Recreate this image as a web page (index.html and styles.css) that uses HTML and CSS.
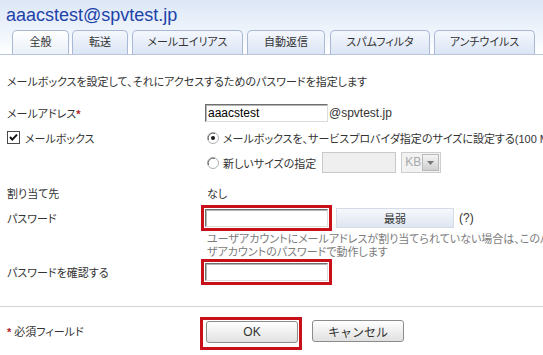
FILE: index.html
```html
<!DOCTYPE html>
<html lang="ja">

<head>
    <meta charset="UTF-8">
    <meta name="viewport" content="width=device-width, initial-scale=1.0">
    <title>aaacstest@spvtest.jp</title>
    <link rel="stylesheet" href="styles.css">
</head>

<body>
    <div class="header">
        <h1 class="title">aaacstest@spvtest.jp</h1>
        <ul class="tabs">
            <li class="tab tab-general active">全般</li>
            <li class="tab tab-forward">転送</li>
            <li class="tab tab-alias">メールエイリアス</li>
            <li class="tab tab-reply">自動返信</li>
            <li class="tab tab-spam">スパムフィルタ</li>
            <li class="tab tab-virus">アンチウイルス</li>
        </ul>
    </div>

    <p class="intro">メールボックスを設定して、それにアクセスするためのパスワードを指定します</p>

    <div class="form">
        <!-- メールアドレス -->
        <div class="row">
            <div class="label">メールアドレス<span class="req">*</span></div>
            <div class="field">
                <input type="text" class="text-input" value="aaacstest">
                <span class="domain">@spvtest.jp</span>
            </div>
        </div>

        <!-- メールボックス -->
        <div class="row">
            <div class="label check-label">
                <svg class="checkbox" width="13" height="13" viewBox="0 0 13 13">
                    <rect x="0.5" y="0.5" width="12" height="12" fill="#fff" stroke="#4a4a4a"/>
                    <path d="M3 6 L5.3 8.6 L10 3.6" fill="none" stroke="#111" stroke-width="2"/>
                </svg>
                メールボックス
            </div>
            <div class="field">
                <svg class="radio" width="12" height="12" viewBox="0 0 12 12">
                    <circle cx="6" cy="6" r="5.5" fill="#fff" stroke="#b0b0b0"/>
                    <path d="M1.5 8 A5 5 0 0 1 8 1.5" fill="none" stroke="#6a6a6a"/>
                    <circle cx="6" cy="6" r="2" fill="#1a1a1a"/>
                </svg>
                <span>メールボックスを、サービスプロバイダ指定のサイズに設定する(100 MB)</span>
            </div>
        </div>

        <div class="row">
            <div class="label"></div>
            <div class="field">
                <svg class="radio" width="12" height="12" viewBox="0 0 12 12">
                    <circle cx="6" cy="6" r="5.5" fill="#fff" stroke="#b0b0b0"/>
                    <path d="M1.5 8 A5 5 0 0 1 8 1.5" fill="none" stroke="#6a6a6a"/>
                </svg>
                <span>新しいサイズの指定</span>
                <input type="text" class="size-input" disabled>
                <span class="select">
                    <span class="select-text">KB</span>
                    <span class="select-arrow">
                        <svg width="7" height="4" viewBox="0 0 7 4"><path d="M0 0 H7 L3.5 4 Z" fill="#777"/></svg>
                    </span>
                </span>
            </div>
        </div>

        <!-- 割り当て先 -->
        <div class="row row-owner">
            <div class="label">割り当て先</div>
            <div class="field field-text">なし</div>
        </div>

        <!-- パスワード -->
        <div class="row row-pass">
            <div class="label">パスワード</div>
            <div class="field">
                <input type="password" class="text-input mark">
                <button class="strength">最弱</button>
                <span class="hint">(?)</span>
            </div>
        </div>

        <div class="help">
            <span>ユーザアカウントにメールアドレスが割り当てられていない場合は、このパスワードはユー</span>
            <span>ザアカウントのパスワードで動作します</span>
        </div>

        <div class="row row-pass">
            <div class="label">パスワードを確認する</div>
            <div class="field">
                <input type="password" class="text-input mark">
            </div>
        </div>
    </div>

    <hr class="divider">

    <div class="row footer">
        <div class="label"><span class="req">*</span> 必須フィールド</div>
        <div class="field">
            <span class="mark-box">
                <button class="btn">OK</button>
            </span>
            <button class="btn btn-cancel">キャンセル</button>
        </div>
    </div>
</body>

</html>
```

FILE: styles.css
```css
html,
body {
    width: 543px;
    height: 355px;
    overflow: hidden;
}

body {
    margin: 0;
    padding: 0;
    font-family: "Liberation Sans", "Noto Sans CJK JP", sans-serif;
    font-size: 11px;
    font-feature-settings: "palt";
    color: #333;
    background-color: #fff;
}

/* ヘッダーとタブ */
.header {
    height: 54px;
    border-bottom: 1px solid #b9c5db;
    background: linear-gradient(#dce7f6, #f4f8fd 40px, #fff);
}

.title {
    margin: 0;
    padding: 3px 0 0 6px;
    height: 24px;
    font-family: "Liberation Sans", sans-serif;
    font-size: 18px;
    font-weight: normal;
    line-height: 24px;
    color: #1d43a9;
}

.tabs {
    display: flex;
    margin: 3px 0 0;
    padding: 0 0 0 12px;
    list-style: none;
}

.tab {
    box-sizing: border-box;
    height: 24px;
    margin-right: 4px;
    border: 1px solid #a9b8d5;
    border-bottom: none;
    border-radius: 5px 5px 0 0;
    background: linear-gradient(#f4f7fd, #dbe5f5);
    line-height: 23px;
    text-align: center;
    color: #333;
}

.tab.active {
    background: linear-gradient(#ffffff, #eaf0f9);
}

.tab-general { width: 57px; margin-right: 3px; }
.tab-forward { width: 56px; }
.tab-alias { width: 111px; }
.tab-reply { width: 78px; margin-right: 5px; }
.tab-spam { width: 100px; }
.tab-virus { width: 101px; }

.intro {
    margin: 20px 0 0 7px;
    line-height: 14px;
    white-space: nowrap;
}

/* フォーム */
.form {
    margin-top: 11px;
}

.row {
    display: flex;
    align-items: center;
    height: 25px;
    white-space: nowrap;
}

.label {
    flex: none;
    box-sizing: border-box;
    width: 205px;
    padding-left: 7px;
}

.field {
    display: flex;
    align-items: center;
}

.field-text {
    padding-left: 2px;
}

.req {
    color: #b3202a;
    font-weight: bold;
}

.check-label {
    display: flex;
    align-items: center;
}

.checkbox {
    margin-right: 5px;
}

.radio {
    margin: 0 4px 0 2px;
}

.text-input {
    box-sizing: border-box;
    width: 123px;
    height: 18px;
    margin: 0;
    padding: 0 2px;
    border: 1px solid;
    border-color: #6f6f6f #dcdcdc #dcdcdc #6f6f6f;
    box-shadow: inset 1px 1px 0 #b4b4b4;
    font-family: "Liberation Sans", sans-serif;
    font-size: 12px;
    color: #000;
    outline: none;
}

.domain {
    margin-left: 1px;
    font-size: 12px;
}

.size-input {
    box-sizing: border-box;
    width: 74px;
    height: 21px;
    margin: 0 0 0 6px;
    border: 1px solid #c9c9c9;
    background-color: #efefef;
}

.select {
    display: flex;
    box-sizing: border-box;
    width: 40px;
    height: 21px;
    margin-left: 5px;
    border: 1px solid #cdcdcd;
    background-color: #f2f2f2;
}

.select-text {
    flex: 1;
    padding-left: 3px;
    line-height: 19px;
    font-size: 12px;
    color: #a8a8a8;
}

.select-arrow {
    display: flex;
    align-items: center;
    justify-content: center;
    width: 15px;
    margin: 1px;
    border: 1px solid #b8b8b8;
    background: linear-gradient(#f4f4f4, #cfcfcf);
}

.row-owner {
    height: 24px;
    margin-top: 6px;
}

.row-pass {
    height: 26px;
}

/* 赤枠（注目箇所） */
.text-input.mark {
    outline: 3px solid #c8101a;
    outline-offset: 1px;
}

.mark-box {
    display: flex;
    margin: 4px 0 0 -5px;
    padding: 1px 1px 4px 3px;
    border: 3px solid #c8101a;
}

.strength {
    box-sizing: border-box;
    width: 118px;
    height: 20px;
    margin: 0 0 0 8px;
    border: 1px solid #d5dce8;
    background: linear-gradient(#f6f8fc, #dfe6f1);
    font-family: inherit;
    font-size: 11px;
    color: #333;
}

.hint {
    margin-left: 5px;
    font-size: 12px;
}

.help {
    display: flex;
    flex-direction: column;
    margin: 2px 0 0 207px;
    line-height: 13px;
    color: #7c7c7c;
    white-space: nowrap;
}

.divider {
    height: 0;
    margin: 21px 0 0;
    border: 0;
    border-top: 1px solid #d4d4d4;
}

/* フッター */
.footer {
    height: 48px;
}

.btn {
    box-sizing: border-box;
    width: 92px;
    height: 22px;
    margin: 0;
    border: 1px solid #8c8c8c;
    border-radius: 3px;
    background: linear-gradient(#ffffff, #e1e1e1);
    font-family: inherit;
    font-size: 12px;
    color: #333;
}

.btn-cancel {
    margin-left: 10px;
}
```
